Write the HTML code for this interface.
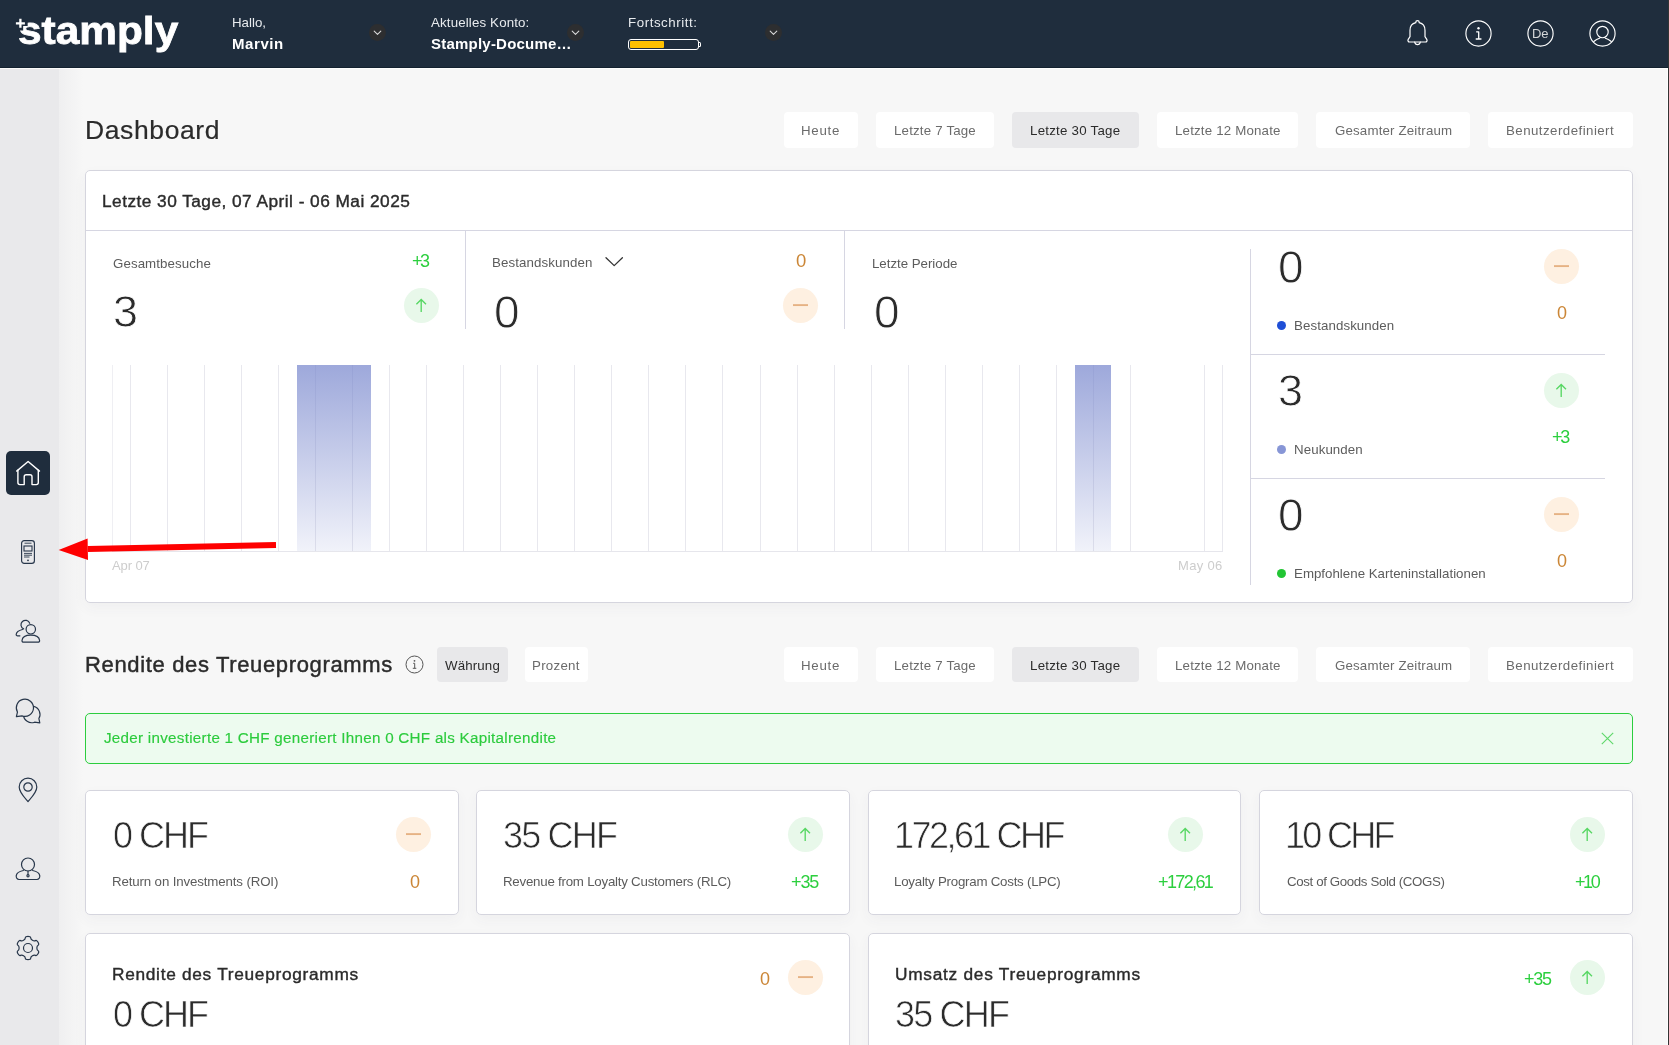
<!DOCTYPE html>
<html lang="de">
<head>
<meta charset="utf-8">
<title>Stamply Dashboard</title>
<style>
*{box-sizing:border-box;margin:0;padding:0}
html,body{width:1669px;height:1045px;overflow:hidden;background:#f7f7f7}
body{font-family:"Liberation Sans",sans-serif;color:#2b2b2b;position:relative}
#root{position:absolute;left:0;top:0;width:1669px;height:1045px;overflow:hidden;background:#f7f7f7}
.a{position:absolute}
.t{position:absolute;white-space:nowrap;will-change:transform}
#hdr{position:absolute;left:0;top:0;width:1669px;height:68px;background:#1f2d3d}
#side{position:absolute;left:0;top:68px;width:59px;height:977px;background:#e9e9eb}
#sideshadow{position:absolute;left:59px;top:68px;width:24px;height:977px;background:linear-gradient(90deg,#efeff0,#f7f7f7)}
#edge{position:absolute;left:1668px;top:0;width:1px;height:1045px;background:#343434}
#hline{position:absolute;left:0;top:67px;width:1668px;height:1px;background:#13212f}
#wline{position:absolute;left:0;top:68px;width:1668px;height:1px;background:rgba(255,255,255,.75)}
#wedge{position:absolute;left:1667px;top:68px;width:1px;height:977px;background:rgba(255,255,255,.8)}
.btn{position:absolute;height:36px;border-radius:4px;background:#fff}
.btn.on{background:#e8e8ea}
.card{position:absolute;background:#fff;border:1px solid #d5d5de;border-radius:5px;box-shadow:0 5px 14px rgba(60,60,90,.045)}
.hl{position:absolute;height:1px;background:#d6d6e2}
.vl{position:absolute;width:1px;background:#d6d6e2}
.circ{position:absolute;width:35px;height:35px;border-radius:50%}
.circ.g{background:#e8f8ea}
.circ.o{background:#fef0e1}
.circ svg{position:absolute;left:0;top:0;width:35px;height:35px}
.dot{position:absolute;width:9px;height:9px;border-radius:50%}
.chev{position:absolute;width:17px;height:17px;border-radius:50%;background:#2d2e30}
.chev svg{position:absolute;left:0;top:0}
svg{display:block;overflow:visible}
</style>
</head>
<body>
<div id="root">
<div id="hdr"></div>
<div class="t" style="left:17.900px;top:8.300px;font-size:39px;line-height:46px;font-weight:700;color:#fff;-webkit-text-stroke:0.800px #fff;transform:scaleX(1.087);transform-origin:0 0">stamply</div>
<svg class="a" style="left:15px;top:18px" width="12" height="12" viewBox="0 0 12 12"><path d="M5.4 0.800v9M0.900 5.300h9" stroke="#1f2d3d" stroke-width="5.500" stroke-linecap="square" fill="none"/><path d="M5.4 0.800v9M0.900 5.300h9" stroke="#fff" stroke-width="2.300" fill="none"/></svg>
<div class="t" style="left:231.70px;top:12.90px;font-size:13.3px;line-height:20px;color:#e8ebee;">Hallo,</div>
<div class="t" style="left:231.70px;top:33.80px;font-size:15px;line-height:20px;color:#fff;font-weight:700;letter-spacing:0.583px;">Marvin</div>
<div class="t" style="left:431.00px;top:12.90px;font-size:13.3px;line-height:20px;color:#e8ebee;letter-spacing:0.147px;">Aktuelles Konto:</div>
<div class="t" style="left:431.00px;top:33.80px;font-size:15px;line-height:20px;color:#fff;font-weight:700;letter-spacing:0.220px;">Stamply-Docume…</div>
<div class="t" style="left:627.70px;top:12.90px;font-size:13.3px;line-height:20px;color:#e8ebee;letter-spacing:0.563px;">Fortschritt:</div>
<div class="chev" style="left:369.0px;top:24px"><svg width="17" height="17" viewBox="0 0 17 17"><path d="M5.2 7.2L8.5 10.3L11.8 7.2" fill="none" stroke="#d9d9d9" stroke-width="1.1" stroke-linecap="round" stroke-linejoin="round"/></svg></div>
<div class="chev" style="left:567.0px;top:24px"><svg width="17" height="17" viewBox="0 0 17 17"><path d="M5.2 7.2L8.5 10.3L11.8 7.2" fill="none" stroke="#d9d9d9" stroke-width="1.1" stroke-linecap="round" stroke-linejoin="round"/></svg></div>
<div class="chev" style="left:765.0px;top:24px"><svg width="17" height="17" viewBox="0 0 17 17"><path d="M5.2 7.2L8.5 10.3L11.8 7.2" fill="none" stroke="#d9d9d9" stroke-width="1.1" stroke-linecap="round" stroke-linejoin="round"/></svg></div>
<div class="a" style="left:628px;top:38.800px;width:71px;height:11.300px;border:1.300px solid #fff;border-radius:3px;background:#1f2d3d"></div>
<div class="a" style="left:698.500px;top:41.500px;width:2.600px;height:5.600px;border:1px solid #fff;border-left:0;border-radius:0 1.500px 1.500px 0"></div>
<div class="a" style="left:630.200px;top:41.200px;width:34px;height:6.700px;background:#fec000;border-radius:1px"></div>
<svg class="a" style="left:1403.700px;top:18.400px" width="27" height="29" viewBox="0 0 27 29"><g fill="none" stroke="#fff" stroke-width="1.200" stroke-linecap="round" stroke-linejoin="round"><path d="M13.500 2.600c-1 0-1.700.7-1.700 1.600v.5C8.200 5.500 6 8.600 6 12.400v6.300l-1.800 2.700c-.7 1.100 0 2.600 1.400 2.600h15.800c1.400 0 2.100-1.500 1.400-2.600L21 18.700v-6.300c0-3.800-2.200-6.900-5.800-7.700v-.5c0-.9-.7-1.600-1.700-1.600z"/><path d="M10.700 24.200c.3 1.500 1.400 2.500 2.800 2.500s2.500-1 2.800-2.500"/></g></svg>
<svg class="a" style="left:1465.400px;top:19.800px" width="27" height="27" viewBox="0 0 27 27"><circle cx="13.500" cy="13.500" r="12.600" fill="none" stroke="#fff" stroke-width="1.150"/><circle cx="13.500" cy="8.300" r="1.200" fill="#fff"/><path d="M11.600 11.800h2.100v7.200M11.200 19h4.800" fill="none" stroke="#fff" stroke-width="1.300" stroke-linecap="round" stroke-linejoin="round"/></svg>
<svg class="a" style="left:1527px;top:19.800px" width="27" height="27" viewBox="0 0 27 27"><circle cx="13.500" cy="13.500" r="12.600" fill="none" stroke="#fff" stroke-width="1.150"/></svg>
<div class="t" style="left:1532.00px;top:23.60px;font-size:13px;line-height:20px;color:#d4d6d8;letter-spacing:-0.088px;">De</div>
<svg class="a" style="left:1588.500px;top:19.800px" width="27" height="27" viewBox="0 0 27 27"><g fill="none" stroke="#fff" stroke-width="1.150"><circle cx="13.500" cy="13.500" r="12.600"/><circle cx="13.500" cy="12" r="5.700"/><path d="M4.400 21.700c2.400-2 4.700-3.100 6.700-3.700M22.600 21.700c-2.400-2-4.700-3.100-6.700-3.700"/></g></svg>
<div id="side"></div><div id="sideshadow"></div>
<div class="a" style="left:6px;top:451px;width:44px;height:44px;border-radius:5px;background:#1f2d3d"></div>
<svg class="a" style="left:15px;top:459px" width="26" height="28" viewBox="0 0 26 28"><g fill="none" stroke="#fff" stroke-width="1.400" stroke-linecap="round" stroke-linejoin="round"><path d="M1.700 12.100L13.100 2.500L24.500 12.100"/><path d="M2.900 11.300V23.600a2 2 0 0 0 2 2H9.200V17.700a2 2 0 0 1 2-2h3.800a2 2 0 0 1 2 2V25.600h4.300a2 2 0 0 0 2-2V11.300"/></g></svg>
<svg class="a" style="left:21px;top:540px" width="14" height="24" viewBox="0 0 14 24"><g fill="none" stroke="#27364a" stroke-width="1.150"><rect x=".6" y=".6" width="12.800" height="22.800" rx="2.600"/><rect x="3" y="6" width="8" height="5" stroke-width="1.100"/><path d="M3 13.400h8M3 15.200h8M3 17h5.500" stroke-width=".9"/><path d="M3.500 3.200h7" stroke-width=".9"/></g><circle cx="7" cy="20.300" r=".9" fill="#27364a"/></svg>
<svg class="a" style="left:15px;top:618px" width="26" height="26" viewBox="0 0 26 26"><g fill="none" stroke="#27364a" stroke-width="1.200" stroke-linecap="round" stroke-linejoin="round"><path d="M14.700 5.300A4.500 4.500 0 1 0 8.600 10.900"/><path d="M7.500 11.500c-3.300.8-6 2.500-6.300 4.800-.1.900.5 1.500 1.400 1.500h2.300"/><circle cx="15.800" cy="11.300" r="4.700"/><path d="M7 22.500c.3-3.300 4-5.300 8.800-5.300s8.500 2 8.800 5.300c.1 1-.6 1.700-1.600 1.700H8.600c-1 0-1.700-.7-1.600-1.700z"/></g></svg>
<svg class="a" style="left:15px;top:697px" width="27" height="27" viewBox="0 0 27 27"><g stroke="#27364a" stroke-width="1.200" stroke-linecap="round" stroke-linejoin="round"><path fill="none" d="M19.540 25.200A8.300 8.300 0 1 1 23.890 21.550L24.800 25.800z"/><path fill="#e9e9eb" d="M2.450 15.100A8.600 8.600 0 1 1 6.960 18.880L1.400 19.600z"/></g></svg>
<svg class="a" style="left:18px;top:777px" width="20" height="26" viewBox="0 0 20 26"><g fill="none" stroke="#27364a" stroke-width="1.200" stroke-linejoin="round"><path d="M10 24.500C7 21 1.200 15.500 1.200 10A8.800 8.800 0 0 1 18.800 10C18.800 15.500 13 21 10 24.500z"/><circle cx="10" cy="10" r="4.200"/></g></svg>
<svg class="a" style="left:15px;top:856px" width="26" height="26" viewBox="0 0 26 26"><g fill="none" stroke="#27364a" stroke-width="1.200" stroke-linecap="round" stroke-linejoin="round"><circle cx="13" cy="8.500" r="6.500"/><path d="M8.400 14.500c-4.100.8-6.900 2.400-7.200 5.400-.1 2 1 3.600 2.800 3.600h18c1.800 0 2.900-1.600 2.800-3.600-.3-3-3.100-4.600-7.200-5.400"/><path d="M13 15v3.500"/><circle cx="13" cy="19.800" r="1.100"/></g></svg>
<svg class="a" style="left:14.700px;top:935.200px" width="26" height="26" viewBox="0 0 26 26"><g fill="none" stroke="#27364a" stroke-width="1.200" stroke-linejoin="round"><path d="M10.33 2.85Q10.32 1.40 13.00 1.40Q15.68 1.40 15.67 2.85Q15.66 4.30 17.43 5.32Q19.21 6.34 20.45 5.61Q21.70 4.88 23.04 7.20Q24.38 9.52 23.12 10.24Q21.87 10.95 21.87 13.00Q21.87 15.05 23.12 15.76Q24.38 16.48 23.04 18.80Q21.70 21.12 20.45 20.39Q19.21 19.66 17.43 20.68Q15.66 21.70 15.67 23.15Q15.68 24.60 13.00 24.60Q10.32 24.60 10.33 23.15Q10.34 21.70 8.57 20.68Q6.79 19.66 5.55 20.39Q4.30 21.12 2.96 18.80Q1.62 16.48 2.88 15.76Q4.13 15.05 4.13 13.00Q4.13 10.95 2.88 10.24Q1.62 9.52 2.96 7.20Q4.30 4.88 5.55 5.61Q6.79 6.34 8.57 5.32Q10.34 4.30 10.33 2.85z"/><circle cx="13" cy="13" r="4.500"/></g></svg>
<div class="t" style="left:84.60px;top:115.00px;font-size:26.5px;line-height:31px;color:#2b2b2b;letter-spacing:0.612px;-webkit-text-stroke:0.2px #2b2b2b;">Dashboard</div>
<div class="btn" style="left:784px;top:112px;width:74px;height:36px"></div>
<div class="t" style="left:801.40px;top:120.60px;font-size:13.3px;line-height:20px;color:#6b6b6b;letter-spacing:0.703px;">Heute</div>
<div class="btn" style="left:876px;top:112px;width:118px;height:36px"></div>
<div class="t" style="left:893.70px;top:120.60px;font-size:13.3px;line-height:20px;color:#6b6b6b;letter-spacing:0.180px;">Letzte 7 Tage</div>
<div class="btn on" style="left:1012px;top:112px;width:127px;height:36px"></div>
<div class="t" style="left:1030.20px;top:120.60px;font-size:13.3px;line-height:20px;color:#2b2b2b;letter-spacing:0.235px;">Letzte 30 Tage</div>
<div class="btn" style="left:1157px;top:112px;width:141px;height:36px"></div>
<div class="t" style="left:1174.50px;top:120.60px;font-size:13.3px;line-height:20px;color:#6b6b6b;letter-spacing:0.176px;">Letzte 12 Monate</div>
<div class="btn" style="left:1316px;top:112px;width:154px;height:36px"></div>
<div class="t" style="left:1334.50px;top:120.60px;font-size:13.3px;line-height:20px;color:#6b6b6b;letter-spacing:0.159px;">Gesamter Zeitraum</div>
<div class="btn" style="left:1488px;top:112px;width:145px;height:36px"></div>
<div class="t" style="left:1506.00px;top:120.60px;font-size:13.3px;line-height:20px;color:#6b6b6b;letter-spacing:0.448px;">Benutzerdefiniert</div>
<div class="card" style="left:85px;top:170px;width:1548px;height:433px"></div>
<div class="t" style="left:102.30px;top:190.60px;font-size:17.3px;line-height:20px;color:#2b2b2b;letter-spacing:0.461px;-webkit-text-stroke:0.4px #2b2b2b;">Letzte 30 Tage, 07 April - 06 Mai 2025</div>
<div class="hl" style="left:86px;top:230px;width:1546px"></div>
<div class="vl" style="left:465px;top:231px;height:98px"></div>
<div class="vl" style="left:844px;top:231px;height:98px"></div>
<div class="vl" style="left:1250px;top:249px;height:336px"></div>
<div class="hl" style="left:1250px;top:354px;width:355px"></div>
<div class="hl" style="left:1250px;top:478px;width:355px"></div>
<div class="t" style="left:112.60px;top:253.80px;font-size:13.3px;line-height:20px;color:#5c5c5c;letter-spacing:0.081px;">Gesamtbesuche</div>
<div class="t" style="left:412.30px;top:250.70px;font-size:18px;line-height:21px;color:#2ccf3e;letter-spacing:-2.512px;">+3</div>
<div class="circ g" style="left:403.9px;top:287.8px"><svg viewBox="0 0 35 35"><path d="M17.2 24V11.700M12.400 16.200L17.2 11.500l4.800 4.700" fill="none" stroke="#57d763" stroke-width="1.350" stroke-linecap="butt" stroke-linejoin="miter"/></svg></div>
<div class="t" style="left:113.20px;top:285.10px;font-size:45px;line-height:54px;color:#2b2b2b;-webkit-text-stroke:0.85px #fff;">3</div>
<div class="t" style="left:492.10px;top:252.80px;font-size:13.3px;line-height:20px;color:#5c5c5c;letter-spacing:0.095px;">Bestandskunden</div>
<svg class="a" style="left:605px;top:257px" width="19" height="10" viewBox="0 0 19 10"><path d="M1 0.800L9.200 8.600L17.400 0.800" fill="none" stroke="#333" stroke-width="1.300" stroke-linecap="round" stroke-linejoin="round"/></svg>
<div class="t" style="left:795.90px;top:250.20px;font-size:18.5px;line-height:22px;color:#cb8636;">0</div>
<div class="circ o" style="left:782.8px;top:287.8px"><svg viewBox="0 0 35 35"><path d="M10 17.1H25" fill="none" stroke="#e6b283" stroke-width="1.900"/></svg></div>
<div class="t" style="left:494.20px;top:285.00px;font-size:46px;line-height:55px;color:#2b2b2b;-webkit-text-stroke:0.85px #fff;">0</div>
<div class="t" style="left:871.60px;top:253.80px;font-size:13.3px;line-height:20px;color:#5c5c5c;letter-spacing:-0.027px;">Letzte Periode</div>
<div class="t" style="left:873.70px;top:285.00px;font-size:46px;line-height:55px;color:#2b2b2b;-webkit-text-stroke:0.85px #fff;">0</div>
<div class="vl" style="left:112.0px;top:365px;height:187px;background:#efeff3"></div><div class="vl" style="left:130.0px;top:365px;height:187px;background:#e8e8ee"></div><div class="vl" style="left:167.0px;top:365px;height:187px;background:#e8e8ee"></div><div class="vl" style="left:204.1px;top:365px;height:187px;background:#e8e8ee"></div><div class="vl" style="left:241.1px;top:365px;height:187px;background:#e8e8ee"></div><div class="vl" style="left:278.1px;top:365px;height:187px;background:#e8e8ee"></div><div class="vl" style="left:315.1px;top:365px;height:187px;background:#e8e8ee"></div><div class="vl" style="left:352.2px;top:365px;height:187px;background:#e8e8ee"></div><div class="vl" style="left:389.2px;top:365px;height:187px;background:#e8e8ee"></div><div class="vl" style="left:426.2px;top:365px;height:187px;background:#e8e8ee"></div><div class="vl" style="left:463.2px;top:365px;height:187px;background:#e8e8ee"></div><div class="vl" style="left:500.3px;top:365px;height:187px;background:#e8e8ee"></div><div class="vl" style="left:537.3px;top:365px;height:187px;background:#e8e8ee"></div><div class="vl" style="left:574.3px;top:365px;height:187px;background:#e8e8ee"></div><div class="vl" style="left:611.4px;top:365px;height:187px;background:#e8e8ee"></div><div class="vl" style="left:648.4px;top:365px;height:187px;background:#e8e8ee"></div><div class="vl" style="left:685.4px;top:365px;height:187px;background:#e8e8ee"></div><div class="vl" style="left:722.4px;top:365px;height:187px;background:#e8e8ee"></div><div class="vl" style="left:759.5px;top:365px;height:187px;background:#e8e8ee"></div><div class="vl" style="left:796.5px;top:365px;height:187px;background:#e8e8ee"></div><div class="vl" style="left:833.5px;top:365px;height:187px;background:#e8e8ee"></div><div class="vl" style="left:870.5px;top:365px;height:187px;background:#e8e8ee"></div><div class="vl" style="left:907.6px;top:365px;height:187px;background:#e8e8ee"></div><div class="vl" style="left:944.6px;top:365px;height:187px;background:#e8e8ee"></div><div class="vl" style="left:981.6px;top:365px;height:187px;background:#e8e8ee"></div><div class="vl" style="left:1018.6px;top:365px;height:187px;background:#e8e8ee"></div><div class="vl" style="left:1055.7px;top:365px;height:187px;background:#e8e8ee"></div><div class="vl" style="left:1092.7px;top:365px;height:187px;background:#e8e8ee"></div><div class="vl" style="left:1129.7px;top:365px;height:187px;background:#e8e8ee"></div><div class="vl" style="left:1203.8px;top:365px;height:187px;background:#e8e8ee"></div><div class="vl" style="left:1222.0px;top:365px;height:187px;background:#e8e8ee"></div>
<div class="a" style="left:297.2px;top:365px;width:36.5px;height:187px;background:linear-gradient(180deg,rgba(120,135,205,.72),rgba(120,135,205,.1))"></div>
<div class="a" style="left:334.3px;top:365px;width:36.5px;height:187px;background:linear-gradient(180deg,rgba(120,135,205,.72),rgba(120,135,205,.1))"></div>
<div class="a" style="left:1074.8px;top:365px;width:36.5px;height:187px;background:linear-gradient(180deg,rgba(120,135,205,.72),rgba(120,135,205,.1))"></div>
<div class="hl" style="left:112px;top:551px;width:1111px;background:#e6e6ec"></div>
<div class="t" style="left:112.00px;top:556.20px;font-size:13px;line-height:20px;color:#cdcdcd;letter-spacing:-0.114px;">Apr 07</div>
<div class="t" style="left:1178.00px;top:556.20px;font-size:13px;line-height:20px;color:#cdcdcd;letter-spacing:0.320px;">May 06</div>
<div class="t" style="left:1278.30px;top:239.70px;font-size:46px;line-height:55px;color:#2b2b2b;-webkit-text-stroke:0.85px #fff;">0</div>
<div class="circ o" style="left:1543.9px;top:248.8px"><svg viewBox="0 0 35 35"><path d="M10 17.1H25" fill="none" stroke="#e6b283" stroke-width="1.900"/></svg></div>
<div class="t" style="left:1557.00px;top:302.70px;font-size:18px;line-height:21px;color:#cb8636;">0</div>
<div class="dot" style="left:1276.9px;top:321.1px;background:#1f4fd6"></div>
<div class="t" style="left:1294.20px;top:315.70px;font-size:13.3px;line-height:20px;color:#5c5c5c;letter-spacing:0.087px;">Bestandskunden</div>
<div class="t" style="left:1277.80px;top:363.80px;font-size:45px;line-height:54px;color:#2b2b2b;-webkit-text-stroke:0.85px #fff;">3</div>
<div class="circ g" style="left:1543.9px;top:372.8px"><svg viewBox="0 0 35 35"><path d="M17.2 24V11.700M12.400 16.200L17.2 11.500l4.800 4.700" fill="none" stroke="#57d763" stroke-width="1.350" stroke-linecap="butt" stroke-linejoin="miter"/></svg></div>
<div class="t" style="left:1552.30px;top:426.70px;font-size:18px;line-height:21px;color:#2ccf3e;letter-spacing:-2.312px;">+3</div>
<div class="dot" style="left:1276.9px;top:445.1px;background:#8796d6"></div>
<div class="t" style="left:1294.20px;top:439.70px;font-size:13.3px;line-height:20px;color:#5c5c5c;letter-spacing:0.085px;">Neukunden</div>
<div class="t" style="left:1278.30px;top:487.70px;font-size:46px;line-height:55px;color:#2b2b2b;-webkit-text-stroke:0.85px #fff;">0</div>
<div class="circ o" style="left:1543.9px;top:496.79999999999995px"><svg viewBox="0 0 35 35"><path d="M10 17.1H25" fill="none" stroke="#e6b283" stroke-width="1.900"/></svg></div>
<div class="t" style="left:1557.00px;top:550.70px;font-size:18px;line-height:21px;color:#cb8636;">0</div>
<div class="dot" style="left:1276.9px;top:569.1px;background:#22c534"></div>
<div class="t" style="left:1294.20px;top:563.70px;font-size:13.3px;line-height:20px;color:#5c5c5c;letter-spacing:0.008px;">Empfohlene Karteninstallationen</div>
<svg class="a" style="left:0;top:0" width="300" height="600" viewBox="0 0 300 600"><path d="M276 545L87.800 549" stroke="#fe0000" stroke-width="5.800" fill="none"/><path d="M58.600 550L87.600 538.400L88 560z" fill="#fe0000"/></svg>
<div class="t" style="left:84.60px;top:651.50px;font-size:22px;line-height:26px;color:#2b2b2b;letter-spacing:0.651px;-webkit-text-stroke:0.45px #2b2b2b;">Rendite des Treueprogramms</div>
<svg class="a" style="left:405.300px;top:655.200px" width="19" height="19" viewBox="0 0 19 19"><circle cx="9.500" cy="9.500" r="8.500" fill="none" stroke="#555" stroke-width="1"/><circle cx="9.500" cy="5.800" r=".9" fill="#555"/><path d="M8.200 8.300h1.500v5M7.800 13.300h3.500" fill="none" stroke="#555" stroke-width="1"/></svg>
<div class="btn on" style="left:437px;top:647px;width:71px;height:35px"></div>
<div class="t" style="left:445.10px;top:655.60px;font-size:13.3px;line-height:20px;color:#2b2b2b;letter-spacing:0.140px;">Währung</div>
<div class="btn" style="left:525px;top:647px;width:63px;height:35px"></div>
<div class="t" style="left:532.20px;top:655.60px;font-size:13.3px;line-height:20px;color:#6b6b6b;letter-spacing:0.262px;">Prozent</div>
<div class="btn" style="left:784px;top:647px;width:74px;height:35px"></div>
<div class="t" style="left:801.40px;top:655.60px;font-size:13.3px;line-height:20px;color:#6b6b6b;letter-spacing:0.703px;">Heute</div>
<div class="btn" style="left:876px;top:647px;width:118px;height:35px"></div>
<div class="t" style="left:893.70px;top:655.60px;font-size:13.3px;line-height:20px;color:#6b6b6b;letter-spacing:0.180px;">Letzte 7 Tage</div>
<div class="btn on" style="left:1012px;top:647px;width:127px;height:35px"></div>
<div class="t" style="left:1030.20px;top:655.60px;font-size:13.3px;line-height:20px;color:#2b2b2b;letter-spacing:0.235px;">Letzte 30 Tage</div>
<div class="btn" style="left:1157px;top:647px;width:141px;height:35px"></div>
<div class="t" style="left:1174.50px;top:655.60px;font-size:13.3px;line-height:20px;color:#6b6b6b;letter-spacing:0.176px;">Letzte 12 Monate</div>
<div class="btn" style="left:1316px;top:647px;width:154px;height:35px"></div>
<div class="t" style="left:1334.50px;top:655.60px;font-size:13.3px;line-height:20px;color:#6b6b6b;letter-spacing:0.159px;">Gesamter Zeitraum</div>
<div class="btn" style="left:1488px;top:647px;width:145px;height:35px"></div>
<div class="t" style="left:1506.00px;top:655.60px;font-size:13.3px;line-height:20px;color:#6b6b6b;letter-spacing:0.448px;">Benutzerdefiniert</div>
<div class="a" style="left:85px;top:713px;width:1548px;height:51px;border:1px solid #2ccd3e;border-radius:5px;background:#edfbef"></div>
<div class="t" style="left:103.90px;top:727.70px;font-size:15.2px;line-height:20px;color:#2ccb3d;letter-spacing:0.275px;-webkit-text-stroke:0.15px #2ccb3d;">Jeder investierte 1 CHF generiert Ihnen 0 CHF als Kapitalrendite</div>
<svg class="a" style="left:1601px;top:732px" width="13" height="13" viewBox="0 0 13 13"><path d="M0.800 0.800L12.200 12.200M12.200 0.800L0.800 12.200" stroke="#5fd86b" stroke-width="1.150" fill="none"/></svg>
<div class="card" style="left:85px;top:790px;width:374px;height:125px"></div>
<div class="t" style="left:112.50px;top:814.30px;font-size:36px;line-height:43px;color:#2b2b2b;letter-spacing:-2.030px;-webkit-text-stroke:0.7px #fff;">0 CHF</div>
<div class="t" style="left:111.70px;top:872.00px;font-size:13.3px;line-height:20px;color:#5c5c5c;letter-spacing:-0.140px;">Return on Investments (ROI)</div>
<div class="circ o" style="left:395.8px;top:816.7px"><svg viewBox="0 0 35 35"><path d="M10 17.1H25" fill="none" stroke="#e6b283" stroke-width="1.900"/></svg></div>
<div class="t" style="left:409.50px;top:871.90px;font-size:18px;line-height:21px;color:#cb8636;">0</div>
<div class="card" style="left:476px;top:790px;width:374px;height:125px"></div>
<div class="t" style="left:503.20px;top:814.30px;font-size:36px;line-height:43px;color:#2b2b2b;letter-spacing:-1.808px;-webkit-text-stroke:0.7px #fff;">35 CHF</div>
<div class="t" style="left:502.90px;top:872.00px;font-size:13.3px;line-height:20px;color:#5c5c5c;letter-spacing:-0.235px;">Revenue from Loyalty Customers (RLC)</div>
<div class="circ g" style="left:787.9px;top:816.7px"><svg viewBox="0 0 35 35"><path d="M17.2 24V11.700M12.400 16.200L17.2 11.500l4.800 4.700" fill="none" stroke="#57d763" stroke-width="1.350" stroke-linecap="butt" stroke-linejoin="miter"/></svg></div>
<div class="t" style="left:791.00px;top:871.90px;font-size:18px;line-height:21px;color:#2ccf3e;letter-spacing:-1.111px;">+35</div>
<div class="card" style="left:868px;top:790px;width:373px;height:125px"></div>
<div class="t" style="left:893.70px;top:814.30px;font-size:36px;line-height:43px;color:#2b2b2b;letter-spacing:-2.512px;-webkit-text-stroke:0.7px #fff;">172,61 CHF</div>
<div class="t" style="left:894.40px;top:872.00px;font-size:13.3px;line-height:20px;color:#5c5c5c;letter-spacing:-0.238px;">Loyalty Program Costs (LPC)</div>
<div class="circ g" style="left:1168.2px;top:816.7px"><svg viewBox="0 0 35 35"><path d="M17.2 24V11.700M12.400 16.200L17.2 11.500l4.800 4.700" fill="none" stroke="#57d763" stroke-width="1.350" stroke-linecap="butt" stroke-linejoin="miter"/></svg></div>
<div class="t" style="left:1158.10px;top:871.90px;font-size:18px;line-height:21px;color:#2ccf3e;letter-spacing:-1.626px;">+172,61</div>
<div class="card" style="left:1259px;top:790px;width:374px;height:125px"></div>
<div class="t" style="left:1285.30px;top:814.30px;font-size:36px;line-height:43px;color:#2b2b2b;letter-spacing:-2.708px;-webkit-text-stroke:0.7px #fff;">10 CHF</div>
<div class="t" style="left:1286.60px;top:872.00px;font-size:13.3px;line-height:20px;color:#5c5c5c;letter-spacing:-0.378px;">Cost of Goods Sold (COGS)</div>
<div class="circ g" style="left:1569.6px;top:816.7px"><svg viewBox="0 0 35 35"><path d="M17.2 24V11.700M12.400 16.200L17.2 11.500l4.800 4.700" fill="none" stroke="#57d763" stroke-width="1.350" stroke-linecap="butt" stroke-linejoin="miter"/></svg></div>
<div class="t" style="left:1575.00px;top:871.90px;font-size:18px;line-height:21px;color:#2ccf3e;letter-spacing:-2.411px;">+10</div>
<div class="card" style="left:85px;top:933px;width:765px;height:140px"></div>
<div class="card" style="left:868px;top:933px;width:765px;height:140px"></div>
<div class="t" style="left:111.70px;top:964.40px;font-size:17.3px;line-height:20px;color:#2b2b2b;letter-spacing:0.701px;-webkit-text-stroke:0.4px #2b2b2b;">Rendite des Treueprogramms</div>
<div class="t" style="left:112.50px;top:992.70px;font-size:36px;line-height:43px;color:#2b2b2b;letter-spacing:-2.030px;-webkit-text-stroke:0.7px #fff;">0 CHF</div>
<div class="t" style="left:759.80px;top:969.10px;font-size:18px;line-height:21px;color:#cb8636;">0</div>
<div class="circ o" style="left:787.9px;top:960.0px"><svg viewBox="0 0 35 35"><path d="M10 17.1H25" fill="none" stroke="#e6b283" stroke-width="1.900"/></svg></div>
<div class="t" style="left:894.70px;top:964.40px;font-size:17.3px;line-height:20px;color:#2b2b2b;letter-spacing:0.730px;-webkit-text-stroke:0.4px #2b2b2b;">Umsatz des Treueprogramms</div>
<div class="t" style="left:895.00px;top:992.70px;font-size:36px;line-height:43px;color:#2b2b2b;letter-spacing:-1.808px;-webkit-text-stroke:0.7px #fff;">35 CHF</div>
<div class="t" style="left:1524.20px;top:968.70px;font-size:18px;line-height:21px;color:#2ccf3e;letter-spacing:-1.261px;">+35</div>
<div class="circ g" style="left:1570.0px;top:960.0px"><svg viewBox="0 0 35 35"><path d="M17.2 24V11.700M12.400 16.200L17.2 11.500l4.800 4.700" fill="none" stroke="#57d763" stroke-width="1.350" stroke-linecap="butt" stroke-linejoin="miter"/></svg></div>
<div id="hline"></div><div id="wline"></div><div id="wedge"></div><div id="edge"></div>
</div>
</body>
</html>
